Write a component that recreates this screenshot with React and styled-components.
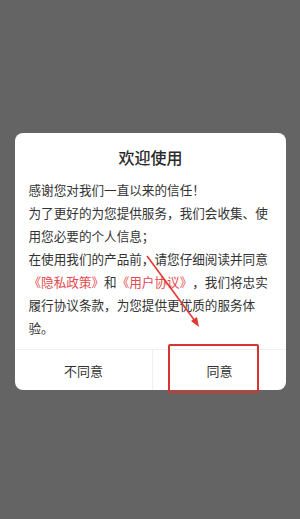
import React from "react";
import styled, { createGlobalStyle } from "styled-components";

const Global = createGlobalStyle`
  html, body { margin: 0; padding: 0; }
  body {
    background: #646464;
    font-family: "Noto Sans CJK SC", "Noto Sans", sans-serif;
    text-spacing-trim: space-all;
  }
`;

const Page = styled.div`
  position: relative;
  width: 300px;
  height: 519px;
  background: #646464;
  padding: 133px 14px 0 15px;
  box-sizing: border-box;
  overflow: hidden;
`;

const Dialog = styled.div`
  background: #fff;
  border-radius: 8px;
  display: flex;
  flex-direction: column;
  overflow: hidden;
`;

const Title = styled.div`
  padding-top: 12px;
  line-height: 24px;
  font-size: 16px;
  font-weight: 500;
  color: #2a2a2a;
  text-align: center;
`;

const Body = styled.div`
  padding: 9px 12px 10px 13.5px;
  font-size: 12.6px;
  line-height: 23px;
  color: #333;
  text-spacing-trim: space-all;
`;

const Para = styled.p`
  margin: 0;
`;

const Link = styled.span`
  color: #e5484d;
`;

const Actions = styled.div`
  display: grid;
  grid-template-columns: 137px 1fr;
  border-top: 1px solid #f0f0f0;
  height: 40px;
`;

const Action = styled.div`
  display: flex;
  align-items: center;
  justify-content: center;
  font-size: 13px;
  color: #333;
  border-left: ${(p) => (p.$divider ? "1px solid #f0f0f0" : "none")};
`;

const Highlight = styled.div`
  position: absolute;
  left: 168px;
  top: 344px;
  width: 91px;
  height: 49px;
  box-sizing: border-box;
  border: 2px solid #d8342f;
  border-radius: 2px;
`;

const ArrowLayer = styled.svg`
  position: absolute;
  left: 0;
  top: 0;
  pointer-events: none;
`;

export default function App() {
  return (
    <>
      <Global />
      <Page>
        <Dialog>
          <Title>欢迎使用</Title>
          <Body>
            <Para>感谢您对我们一直以来的信任！</Para>
            <Para>为了更好的为您提供服务，我们会收集、使用您必要的个人信息；</Para>
            <Para>
              在使用我们的产品前，请您仔细阅读并同意<Link>《隐私政策》</Link>和<Link>《用户协议》</Link>，我们将忠实履行协议条款，为您提供更优质的服务体验。
            </Para>
          </Body>
          <Actions>
            <Action>不同意</Action>
            <Action $divider>同意</Action>
          </Actions>
        </Dialog>
        <Highlight />
        <ArrowLayer width="300" height="519" viewBox="0 0 300 519">
          <line x1="147" y1="256" x2="195" y2="321" stroke="#de3a33" strokeWidth="1.6" />
          <polygon points="199,327 191,321 197,317" fill="#de3a33" />
        </ArrowLayer>
      </Page>
    </>
  );
}
